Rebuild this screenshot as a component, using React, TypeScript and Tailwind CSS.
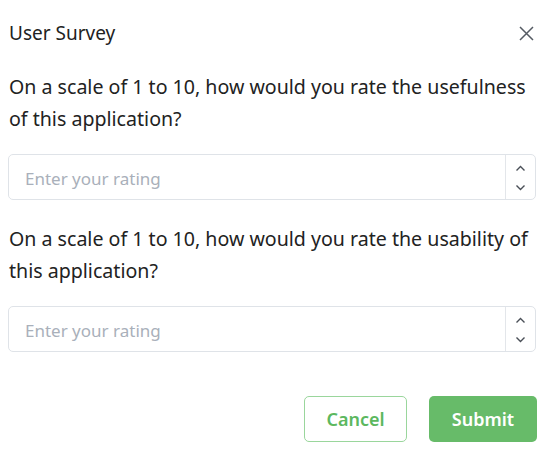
import React, { useState } from 'react'

function RatingInput({ value, onChange }: { value: string; onChange: (v: string) => void }) {
    const step = (d: number) => {
        const n = Math.min(10, Math.max(1, (parseInt(value) || 0) + d))
        onChange(String(n))
    }
    return (
        <div className="mt-[19px] flex h-[46px] rounded-[5px] border border-[#dfe3e8] bg-white overflow-hidden">
            <input
                className="flex-1 min-w-0 pl-[16px] pt-[4px] text-[17px] text-[#333] outline-none placeholder:text-[#a9b0ba]"
                placeholder="Enter your rating"
                value={value}
                onChange={(e) => onChange(e.target.value)}
            />
            <div className="w-[30px] border-l border-[#e3e6ea] flex flex-col items-center justify-center gap-[11px] pt-[1px] text-[#4a4f57]">
                <button className="h-[8px] flex items-center" onClick={() => step(1)}>
                    <svg width="11" height="7" viewBox="0 0 11 7" fill="none" stroke="currentColor" strokeWidth="1.4">
                        <path d="M1.5 5.5 L5.5 1.5 L9.5 5.5" />
                    </svg>
                </button>
                <button className="h-[8px] flex items-center" onClick={() => step(-1)}>
                    <svg width="11" height="7" viewBox="0 0 11 7" fill="none" stroke="currentColor" strokeWidth="1.4">
                        <path d="M1.5 1.5 L5.5 5.5 L9.5 1.5" />
                    </svg>
                </button>
            </div>
        </div>
    )
}

export default function App() {
    const [usefulness, setUsefulness] = useState('')
    const [usability, setUsability] = useState('')

    return (
        <div className="w-[550px] h-[455px] bg-white pl-[8px] pr-[14px] pt-[21px] font-['Noto_Sans',sans-serif] text-[#222]">
            {/* Header */}
            <div className="flex items-center justify-between h-[24px] pl-[1px]">
                <span className="text-[19px]">User Survey</span>
                <button className="text-[#555b63] mr-[2px]">
                    <svg width="15" height="15" viewBox="0 0 15 15" stroke="currentColor" strokeWidth="1.5">
                        <path d="M1 1 L14 14 M14 1 L1 14" />
                    </svg>
                </button>
            </div>

            <p className="mt-[26px] mr-[-8px] pl-[1px] text-[19.6px] leading-[32px]">
                On a scale of 1 to 10, how would you rate the usefulness of this application?
            </p>
            <RatingInput value={usefulness} onChange={setUsefulness} />

            <p className="mt-[23px] mr-[-8px] pl-[1px] text-[19.6px] leading-[32px]">
                On a scale of 1 to 10, how would you rate the usability of this application?
            </p>
            <RatingInput value={usability} onChange={setUsability} />

            {/* Footer */}
            <div className="mt-[44px] flex justify-end gap-[22px] mr-[-1px]">
                <button className="w-[103px] h-[46px] rounded-[5px] border border-[#9ad69c] text-[#5cb85f] text-[18px] font-semibold">
                    Cancel
                </button>
                <button className="w-[108px] h-[46px] rounded-[5px] bg-[#67bb69] text-white text-[18px] font-semibold">
                    Submit
                </button>
            </div>
        </div>
    )
}
